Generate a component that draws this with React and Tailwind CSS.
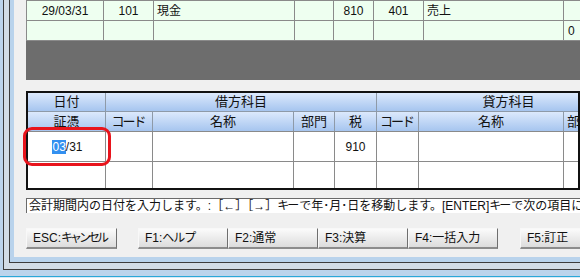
import React from "react";

const F = { fontFamily: '"Liberation Sans", "Noto Sans CJK JP", sans-serif' };

function TopCell({ w, children, align = "center" }) {
  return (
    <div
      className={`h-full shrink-0 flex items-center border-l border-[#8a8a8a] ${
        align === "center" ? "justify-center" : "justify-start pl-[3px]"
      }`}
      style={{ width: w }}
    >
      {children}
    </div>
  );
}

function HCell({ w, children, first }) {
  return (
    <div
      className={`h-full shrink-0 flex items-center justify-center ${first ? "" : "border-l border-[#8e9aa8]"}`}
      style={{ width: w }}
    >
      {children}
    </div>
  );
}

function DCell({ w, children, first }) {
  return (
    <div
      className={`h-full shrink-0 flex items-center justify-center ${first ? "" : "border-l border-[#8a8a8a]"}`}
      style={{ width: w }}
    >
      {children}
    </div>
  );
}

function Btn({ w, children }) {
  return (
    <div
      className="h-[21px] shrink-0 flex items-center pl-[6px] whitespace-nowrap overflow-hidden bg-gradient-to-b from-[#fbfbfb] to-[#dcdcdc] border-t border-l border-[#f8f8f8] border-r border-r-[#6e6e6e] border-b-2 border-b-[#8c8c8c] text-[12px] text-[#111]"
      style={{ width: w }}
    >
      {children}
    </div>
  );
}

const Code = () => <span className="tracking-[-2px] pr-[2px]">コード</span>;

export default function App() {
  const topCols = [77, 50, 141, 39, 40, 50, 140, 80];
  const botCols = [77, 47, 141, 41, 42, 42, 145, 80];
  return (
    <div className="w-[580px] h-[278px] overflow-hidden bg-[#bcd4ec] flex flex-col text-[#111]" style={F}>
      <div className="pl-[3px] h-[270px] shrink-0">
        <div className="h-full border-l border-b border-[#3c3c3c] bg-[#d2dce6] pl-[5px] pb-[6px]">
          <div className="h-full border-l border-b border-[#3c3c3c] bg-[#b9d3ec] pl-[4px] pb-[5px]">
            <div className="h-full bg-[#f0f0f0] pl-[12px] flex flex-col overflow-hidden">
              {/* top grid */}
              <div className="h-[80px] shrink-0 flex flex-col">
                <div className="h-[21px] shrink-0 flex border-t border-b border-[#8a8a8a] bg-[#eefff0] text-[12px]">
                  <TopCell w={topCols[0]}>29/03/31</TopCell>
                  <TopCell w={topCols[1]}>101</TopCell>
                  <TopCell w={topCols[2]} align="left">現金</TopCell>
                  <TopCell w={topCols[3]}></TopCell>
                  <TopCell w={topCols[4]}>810</TopCell>
                  <TopCell w={topCols[5]}>401</TopCell>
                  <TopCell w={topCols[6]} align="left">売上</TopCell>
                  <TopCell w={topCols[7]}></TopCell>
                </div>
                <div className="h-[20px] shrink-0 flex border-b border-[#8a8a8a] bg-[#eefff0] text-[12px]">
                  <TopCell w={topCols[0]}></TopCell>
                  <TopCell w={topCols[1]}></TopCell>
                  <TopCell w={topCols[2]}></TopCell>
                  <TopCell w={topCols[3]}></TopCell>
                  <TopCell w={topCols[4]}></TopCell>
                  <TopCell w={topCols[5]}></TopCell>
                  <TopCell w={topCols[6]}></TopCell>
                  <TopCell w={topCols[7]} align="left">
                    <span className="pl-[1px]">0</span>
                  </TopCell>
                </div>
                <div className="flex-1 bg-[#6d6d6d]" />
              </div>

              {/* bottom table */}
              <div className="mt-[11px] h-[99px] shrink-0 border-2 border-[#111] bg-white flex flex-col text-[12px] relative">
                <div className="h-[19px] shrink-0 flex border-b border-[#8e9aa8] bg-gradient-to-b from-[#dce9fc] to-[#a6c5ef] text-[13px]">
                  <HCell w={77} first>日付</HCell>
                  <HCell w={271}>借方科目</HCell>
                  <HCell w={264}>貸方科目</HCell>
                </div>
                <div className="h-[20px] shrink-0 flex border-b border-[#8a8a8a] bg-gradient-to-b from-[#dce9fc] to-[#a6c5ef] text-[13px]">
                  <HCell w={botCols[0]} first>証憑</HCell>
                  <HCell w={botCols[1]}><Code /></HCell>
                  <HCell w={botCols[2]}>名称</HCell>
                  <HCell w={botCols[3]}>部門</HCell>
                  <HCell w={botCols[4]}>税</HCell>
                  <HCell w={botCols[5]}><Code /></HCell>
                  <HCell w={botCols[6]}>名称</HCell>
                  <HCell w={botCols[7]}>
                    <span className="w-full pl-[3px]">部門</span>
                  </HCell>
                </div>
                <div className="h-[30px] shrink-0 flex border-b border-[#8a8a8a]">
                  <DCell w={botCols[0]} first>
                    <span className="pl-[2px]">
                      <span className="bg-[#3390f0] text-white">03</span>/31
                    </span>
                  </DCell>
                  <DCell w={botCols[1]}></DCell>
                  <DCell w={botCols[2]}></DCell>
                  <DCell w={botCols[3]}></DCell>
                  <DCell w={botCols[4]}>910</DCell>
                  <DCell w={botCols[5]}></DCell>
                  <DCell w={botCols[6]}></DCell>
                  <DCell w={botCols[7]}></DCell>
                </div>
                <div className="flex-1 flex">
                  <DCell w={botCols[0]} first></DCell>
                  <DCell w={botCols[1]}></DCell>
                  <DCell w={botCols[2]}></DCell>
                  <DCell w={botCols[3]}></DCell>
                  <DCell w={botCols[4]}></DCell>
                  <DCell w={botCols[5]}></DCell>
                  <DCell w={botCols[6]}></DCell>
                  <DCell w={botCols[7]}></DCell>
                </div>
                <div className="absolute left-[-5px] top-[34px] w-[88px] h-[39px] border-[3px] border-[#e8141c] rounded-[9px]" />
              </div>

              {/* status */}
              <div className="mt-[8px] h-[15px] shrink-0 border-t border-l border-[#6a6a6a] bg-white flex items-center pl-[2px] text-[12px] whitespace-nowrap overflow-hidden">
                会計期間内の日付を入力します。:［←］［→］<span className="tracking-[-2px] pr-[2px]">キー</span>で年･月･日を移動します。[ENTER]<span className="tracking-[-2px] pr-[2px]">キー</span>で次の項目に進みます。
              </div>

              {/* buttons */}
              <div className="mt-[15px] flex shrink-0">
                <Btn w={91}>ESC:<span className="tracking-[-3px]">キャンセル</span></Btn>
                <div className="w-[21px] shrink-0" />
                <Btn w={90}>F1:<span className="tracking-[-1px]">ヘルプ</span></Btn>
                <Btn w={90}>F2:通常</Btn>
                <Btn w={90}>F3:決算</Btn>
                <Btn w={90}>F4:一括入力</Btn>
                <div className="w-[22px] shrink-0" />
                <Btn w={90}>F5:訂正</Btn>
              </div>
            </div>
          </div>
        </div>
      </div>
      <div className="h-[6px] shrink-0 bg-[#bcd4ec]" />
      <div className="h-[1px] shrink-0 bg-[#2aa8d8]" />
      <div className="h-[1px] shrink-0 bg-[#dce8f4]" />
    </div>
  );
}
